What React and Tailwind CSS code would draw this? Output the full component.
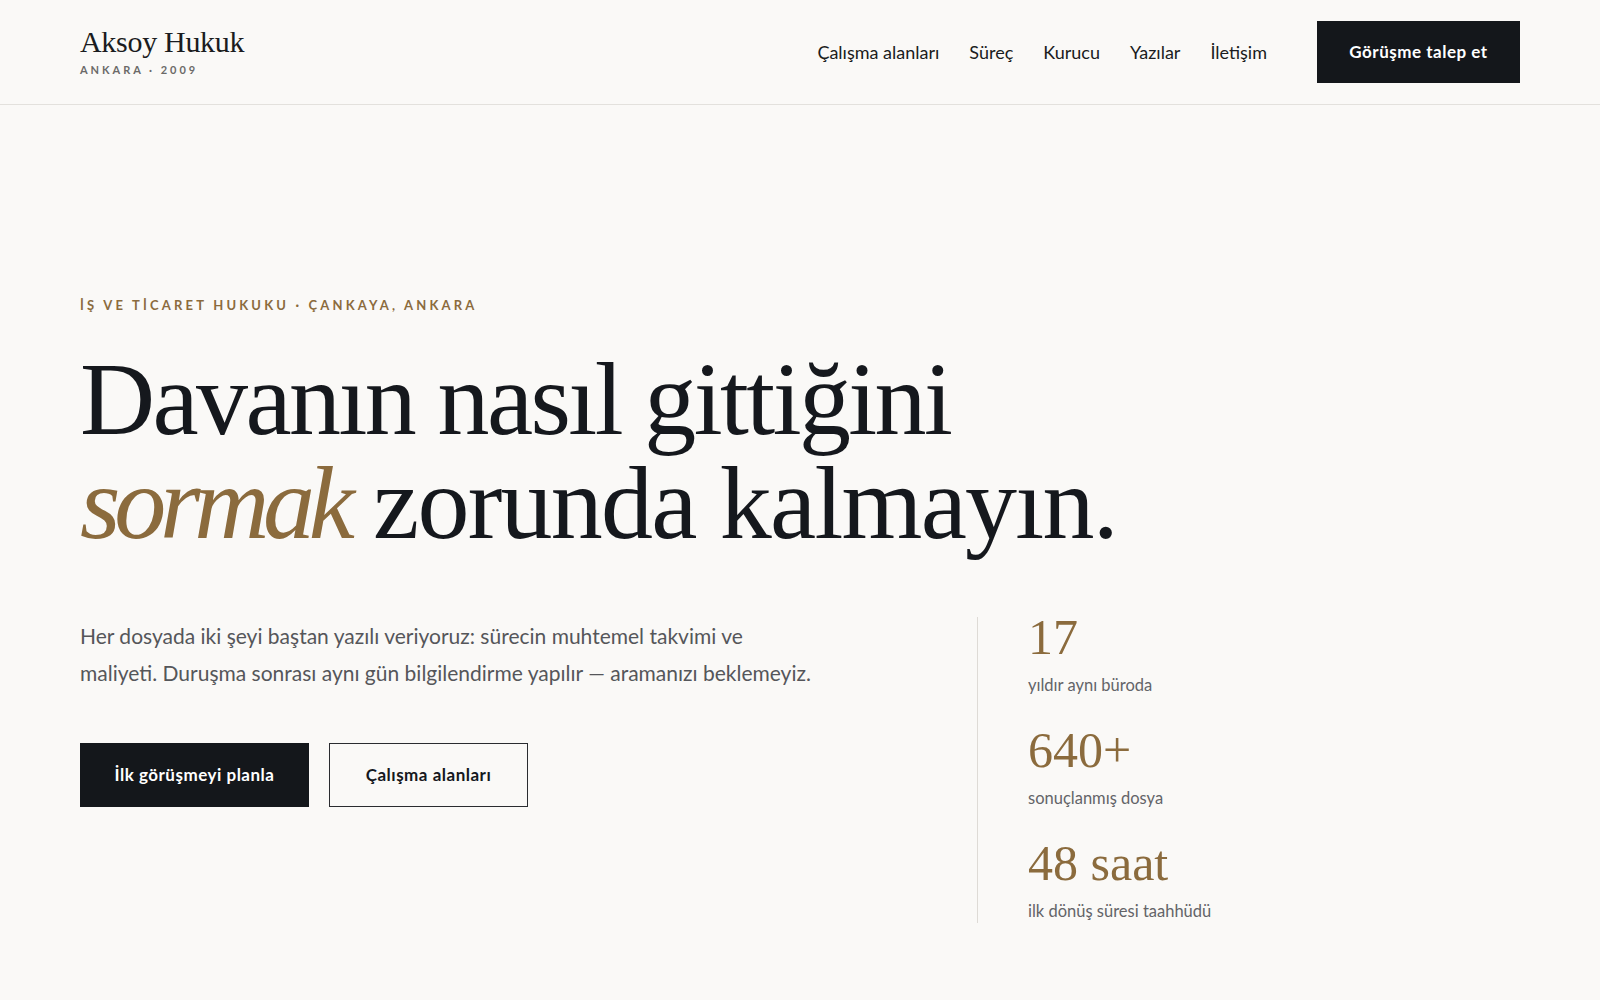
import React from "react";

export default function App() {
  return (
    <div className="min-h-screen bg-[#faf9f7] text-[#15181d] font-['Lato','Noto_Sans',sans-serif]">
      <header className="border-b border-[#e3e1dd]">
        <div className="mx-auto flex h-[104px] max-w-[1440px] items-center justify-between">
          <div className="flex flex-col pb-[2px]">
            <span className="font-['Liberation_Serif',serif] text-[30px] leading-none tracking-[-0.01em] text-[#1a1c20]">
              Aksoy Hukuk
            </span>
            <span className="mt-[7px] text-[11px] font-bold leading-none tracking-[0.27em] text-[#6b6a68]">
              ANKARA · 2009
            </span>
          </div>
          <nav className="flex items-center">
            <div className="flex items-center gap-[30px] text-[18px] text-[#1a1c20]">
              <a>Çalışma alanları</a>
              <a>Süreç</a>
              <a>Kurucu</a>
              <a>Yazılar</a>
              <a>İletişim</a>
            </div>
            <a className="ml-[50px] flex h-[62px] w-[203px] items-center justify-center bg-[#14171b] text-[17px] font-bold tracking-[0.03em] text-white">
              Görüşme talep et
            </a>
          </nav>
        </div>
      </header>

      <main className="mx-auto max-w-[1440px] pt-[190px] pb-[60px]">
        <p className="text-[13px] font-bold leading-[20px] tracking-[0.245em] text-[#8b6b3d]">
          İŞ VE TİCARET HUKUKU · ÇANKAYA, ANKARA
        </p>
        <h1 className="mt-[32px] font-['Liberation_Serif',serif] text-[104px] font-normal leading-[104px] tracking-[-0.025em] text-[#15181d]">
          Davanın nasıl gittiğini
          <br />
          <em className="italic tracking-[-0.06em] text-[#8b6b3d]">sormak</em>
          <span className="tracking-[-0.017em]"> zorunda kalmayın.</span>
        </h1>

        <div className="mt-[62px] grid grid-cols-[897px_1fr]">
          <div>
            <p className="text-[21px] leading-[37px] text-[#55565a]">
              Her dosyada iki şeyi baştan yazılı veriyoruz: sürecin muhtemel takvimi ve
              <br />
              maliyeti. Duruşma sonrası aynı gün bilgilendirme yapılır — aramanızı beklemeyiz.
            </p>
            <div className="mt-[52px] flex gap-[20px]">
              <a className="flex h-[64px] w-[229px] items-center justify-center bg-[#14171b] text-[17px] font-bold tracking-[0.03em] text-white">
                İlk görüşmeyi planla
              </a>
              <a className="flex h-[64px] w-[199px] items-center justify-center border-[1.5px] border-[#2a2c30] text-[17px] font-bold tracking-[0.03em] text-[#15181d]">
                Çalışma alanları
              </a>
            </div>
          </div>
          <div className="flex flex-col gap-[33px] border-l border-[#dedbd6] pl-[50px]">
            {[
              ["17", "yıldır aynı büroda"],
              ["640+", "sonuçlanmış dosya"],
              ["48 saat", "ilk dönüş süresi taahhüdü"],
            ].map(([n, l]) => (
              <div key={n} className="flex flex-col">
                <span className="font-['Liberation_Serif',serif] text-[50px] leading-[40px] text-[#8b6b3d]">{n}</span>
                <span className="mt-[16px] text-[16.5px] leading-[24px] text-[#636468]">{l}</span>
              </div>
            ))}
          </div>
        </div>
      </main>
    </div>
  );
}
